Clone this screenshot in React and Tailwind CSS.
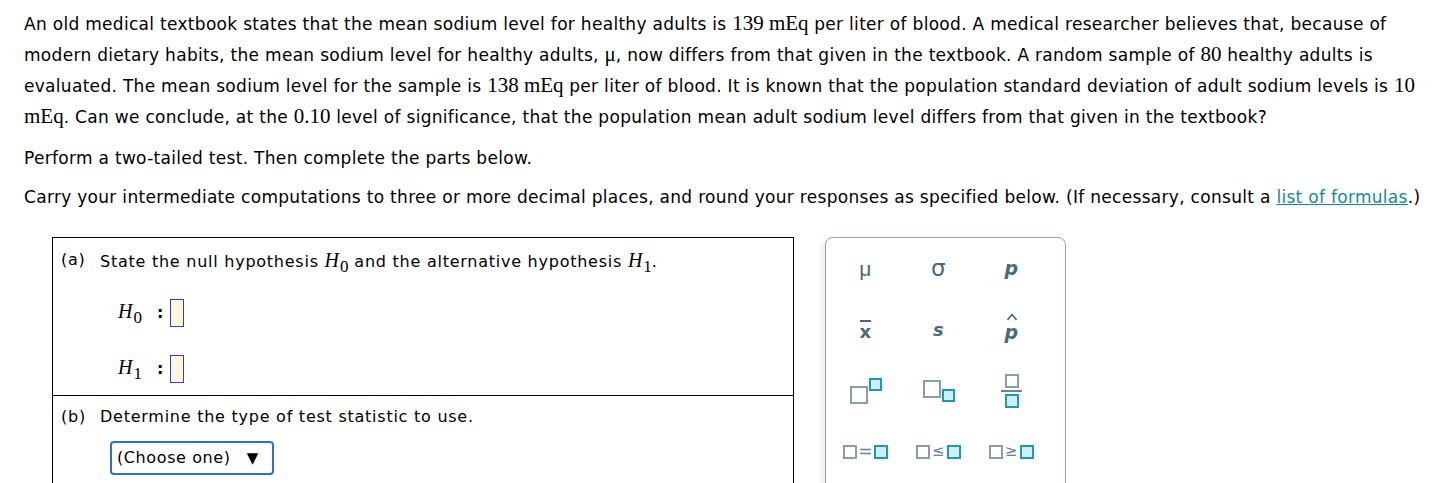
import React from "react";

const serif = "font-['Liberation_Serif',serif]";

const Num = ({ children }) => (
  <span className={`${serif} text-[21px] leading-none tracking-normal`}>{children}</span>
);

const H = ({ sub }) => (
  <span className={`${serif} italic text-[20px] leading-none tracking-normal`}>
    H<sub className="not-italic text-[17px] relative top-[5px] ml-[1px]">{sub}</sub>
  </span>
);

const Hyp = ({ sub }) => (
  <div className="flex items-center h-[28px]">
    <span className="w-[39px]">
      <H sub={sub} />
    </span>
    <span className="font-bold mr-[6px]">:</span>
    <span className="inline-block w-[14px] h-[28px] border border-[#3333ff] bg-[#fff8dc]" />
  </div>
);

const Box = ({ teal, size = 18 }) => (
  <span
    className={
      teal
        ? "block border-2 border-[#1a9bb3] bg-[#cdeef4]"
        : "block border-2 border-[#8a9ea6] bg-white"
    }
    style={{ width: size, height: size }}
  />
);

const Cell = ({ children }) => (
  <div className="flex items-center justify-center">{children}</div>
);

const Palette = () => (
  <div className="w-[241px] h-[260px] border border-[#8fa5ad] rounded-[8px] shadow-[-3px_2px_6px_rgba(0,0,0,0.08)] grid grid-cols-[73px_73px_73px] grid-rows-[61px_61px_61px_61px] pl-[3px] text-[#476a78] font-['DejaVu_Sans',sans-serif]">
    <Cell>
      <span className="text-[21px] font-['Liberation_Sans',sans-serif]">μ</span>
    </Cell>
    <Cell>
      <span className="text-[23px] leading-none">σ</span>
    </Cell>
    <Cell>
      <span className="text-[19px] italic font-bold">p</span>
    </Cell>
    <Cell>
      <span className="text-[18px] font-bold border-t-2 border-[#476a78] leading-[17px] pt-[1px]">x</span>
    </Cell>
    <Cell>
      <span className="text-[18px] italic font-bold">s</span>
    </Cell>
    <Cell>
      <span className="relative text-[19px] italic font-bold mt-[6px]">
        p
        <svg className="absolute left-[1px] -top-[5px]" width="12" height="8" viewBox="0 0 12 8">
          <path d="M1.5 7 L6 1.5 L10.5 7" fill="none" stroke="#476a78" strokeWidth="1.6" />
        </svg>
      </span>
    </Cell>
    <Cell>
      <div className="flex items-start">
        <div className="mt-[8px]">
          <Box size={18} />
        </div>
        <div className="ml-[1px]">
          <Box teal size={13} />
        </div>
      </div>
    </Cell>
    <Cell>
      <div className="flex items-start">
        <Box size={18} />
        <div className="ml-[1px] mt-[9px]">
          <Box teal size={13} />
        </div>
      </div>
    </Cell>
    <Cell>
      <div className="flex flex-col items-center">
        <Box size={14} />
        <span className="block w-[21px] h-[2px] bg-[#6a8590] my-[2px]" />
        <Box teal size={14} />
      </div>
    </Cell>
    <Cell>
      <div className="flex items-center gap-[1px]">
        <Box size={14} />
        <span className="text-[17px] leading-none text-[#6a8590]">=</span>
        <Box teal size={14} />
      </div>
    </Cell>
    <Cell>
      <div className="flex items-center gap-[2px]">
        <Box size={14} />
        <span className="text-[15px] leading-none text-[#6a8590]">≤</span>
        <Box teal size={14} />
      </div>
    </Cell>
    <Cell>
      <div className="flex items-center gap-[2px]">
        <Box size={14} />
        <span className="text-[15px] leading-none text-[#6a8590]">≥</span>
        <Box teal size={14} />
      </div>
    </Cell>
  </div>
);

export default function App() {
  return (
    <div className="w-[1443px] h-[483px] overflow-hidden bg-white text-black font-['DejaVu_Sans',sans-serif] text-[17px] tracking-[0.3px] px-[24px] pt-[9px]">
      <p className="leading-[31px] whitespace-nowrap">
        An old medical textbook states that the mean sodium level for healthy adults is <Num>139 mEq</Num> per liter of blood. A medical researcher believes that, because of
        <br />
        modern dietary habits, the mean sodium level for healthy adults, <Num>μ</Num>, now differs from that given in the textbook. A random sample of <Num>80</Num> healthy adults is
        <br />
        evaluated. The mean sodium level for the sample is <Num>138 mEq</Num> per liter of blood. It is known that the population standard deviation of adult sodium levels is <Num>10</Num>
        <br />
        <Num>mEq</Num>. Can we conclude, at the <Num>0.10</Num> level of significance, that the population mean adult sodium level differs from that given in the textbook?
      </p>
      <p className="mt-[13px] leading-[24px]">Perform a two-tailed test. Then complete the parts below.</p>
      <p className="mt-[15px] leading-[24px] whitespace-nowrap">
        Carry your intermediate computations to three or more decimal places, and round your responses as specified below. (If necessary, consult a{" "}
        <span className="text-[#138aa0] underline">list of formulas</span>.)
      </p>
      <div className="flex mt-[28px] ml-[28px] gap-[31px] items-start">
        <div className="w-[742px] border border-black border-b-0 text-[16px] tracking-[0.75px]">
          <div className="h-[158px] border-b border-black px-[8px] pt-[12px]">
            <div className="flex items-baseline">
              <span className="w-[39px] relative -top-[2px]">(a)</span>
              <span>
                State the null hypothesis <H sub="0" /> and the alternative hypothesis <H sub="1" />.
              </span>
            </div>
            <div className="ml-[57px] mt-[25px] flex flex-col gap-[28px]">
              <Hyp sub="0" />
              <Hyp sub="1" />
            </div>
          </div>
          <div className="h-[100px] px-[8px] pt-[9px]">
            <div className="flex items-baseline">
              <span className="w-[39px]">(b)</span>
              <span>Determine the type of test statistic to use.</span>
            </div>
            <div className="ml-[49px] mt-[12px] flex items-center h-[34px] w-[164px] border-2 border-[#2d6fd2] rounded-[4px] px-[5px] text-[16px] tracking-[0.6px]">
              (Choose one) <span className="ml-[16px] text-[15px]">▼</span>
            </div>
          </div>
        </div>
        <Palette />
      </div>
    </div>
  );
}
